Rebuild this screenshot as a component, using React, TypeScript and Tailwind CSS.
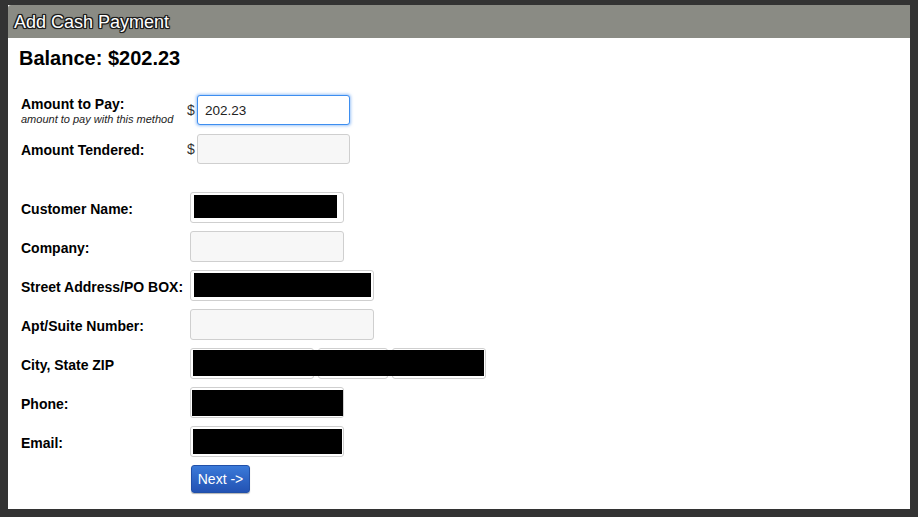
import React from "react";

function Field({ w, empty, children }: { w: string; empty?: boolean; children?: React.ReactNode }) {
  return (
    <div
      className={`relative h-[31px] ${w} rounded-[3px] border border-[#cfcfcf] ${empty ? "bg-[#f7f7f7]" : "bg-white"}`}
    >
      {children}
    </div>
  );
}

function Row({ label, children, mt = "mt-[8px]" }: { label: string; children: React.ReactNode; mt?: string }) {
  return (
    <div className={`flex items-center ${mt}`}>
      <div className="w-[169px] text-[14px] font-bold text-black leading-[16px] mt-[2px]">{label}</div>
      {children}
    </div>
  );
}

export default function App() {
  return (
    <div
      className="w-[918px] h-[517px] bg-[#333333] pt-[5px] pl-[8px]"
      style={{ fontFamily: '"Liberation Sans", Arial, sans-serif' }}
    >
      <div className="w-[902px] h-[504px] bg-white flex flex-col">
        <div className="h-[33px] bg-[#8a8b84] flex items-center pl-[6px] rounded-tl-[3px]">
          <span className="text-[18px] text-white leading-[20px] [text-shadow:-1px_-1px_0_#1a1a1a,1px_-1px_0_#1a1a1a,-1px_1px_0_#1a1a1a,1px_1px_0_#1a1a1a,0_1px_1px_#1a1a1a,0_-1px_1px_#1a1a1a,1px_0_1px_#1a1a1a,-1px_0_1px_#1a1a1a]">
            Add Cash Payment
          </span>
        </div>
        <div className="pl-[13px] pt-[8px]">
          <div className="-ml-[2px] text-[20px] font-bold leading-[24px] text-black">Balance: $202.23</div>

          <div className="flex items-center mt-[25px] h-[30px]">
            <div className="w-[166px] mt-[1px]">
              <div className="text-[14px] font-bold leading-[16px] text-black">Amount to Pay:</div>
              <div className="text-[11px] italic leading-[14px] text-[#222]">amount to pay with this method</div>
            </div>
            <span className="w-[10px] text-[14px] text-[#333] mt-[1px]">$</span>
            <div className="h-[30px] w-[153px] rounded-[3px] border border-[#3d8ef0] bg-white shadow-[0_0_3px_1px_rgba(80,150,240,0.55)] flex items-center pl-[7px] pt-[2px] text-[13.5px] text-[#222]">
              202.23
            </div>
          </div>

          <div className="flex items-center mt-[9px] h-[30px]">
            <div className="w-[166px] text-[14px] font-bold leading-[16px] text-black mt-[2px]">Amount Tendered:</div>
            <span className="w-[10px] text-[14px] text-[#333] mt-[1px]">$</span>
            <div className="h-[30px] w-[153px] rounded-[3px] border border-[#cfcfcf] bg-[#f7f7f7]" />
          </div>

          <Row label="Customer Name:" mt="mt-[28px]">
            <Field w="w-[154px]">
              <div className="absolute left-[3px] top-[2px] w-[143px] h-[23px] bg-black" />
            </Field>
          </Row>
          <Row label="Company:">
            <Field w="w-[154px]" empty />
          </Row>
          <Row label="Street Address/PO BOX:">
            <Field w="w-[184px]">
              <div className="absolute left-[3px] top-[2px] w-[177px] h-[24px] bg-black" />
            </Field>
          </Row>
          <Row label="Apt/Suite Number:">
            <Field w="w-[184px]" empty />
          </Row>
          <Row label="City, State ZIP">
            <div className="relative flex gap-[4px]">
              <Field w="w-[124px]" />
              <Field w="w-[70px]" />
              <Field w="w-[94px]" />
              <div className="absolute left-[3px] top-[2px] w-[291px] h-[26px] bg-black" />
            </div>
          </Row>
          <Row label="Phone:">
            <Field w="w-[154px]">
              <div className="absolute left-[1px] top-[2px] w-[151px] h-[26px] bg-black" />
            </Field>
          </Row>
          <Row label="Email:">
            <Field w="w-[154px]">
              <div className="absolute left-[2px] top-[2px] w-[149px] h-[25px] bg-black" />
            </Field>
          </Row>
          <div className="mt-[8px] pl-[170px]">
            <button className="h-[28px] w-[59px] rounded-[3px] border border-[#2150a8] bg-gradient-to-b from-[#3b7ad9] to-[#2352b3] text-[14px] text-white leading-[16px] shadow-[0_1px_1px_rgba(0,0,0,0.3)]">
              Next -&gt;
            </button>
          </div>
        </div>
      </div>
    </div>
  );
}
